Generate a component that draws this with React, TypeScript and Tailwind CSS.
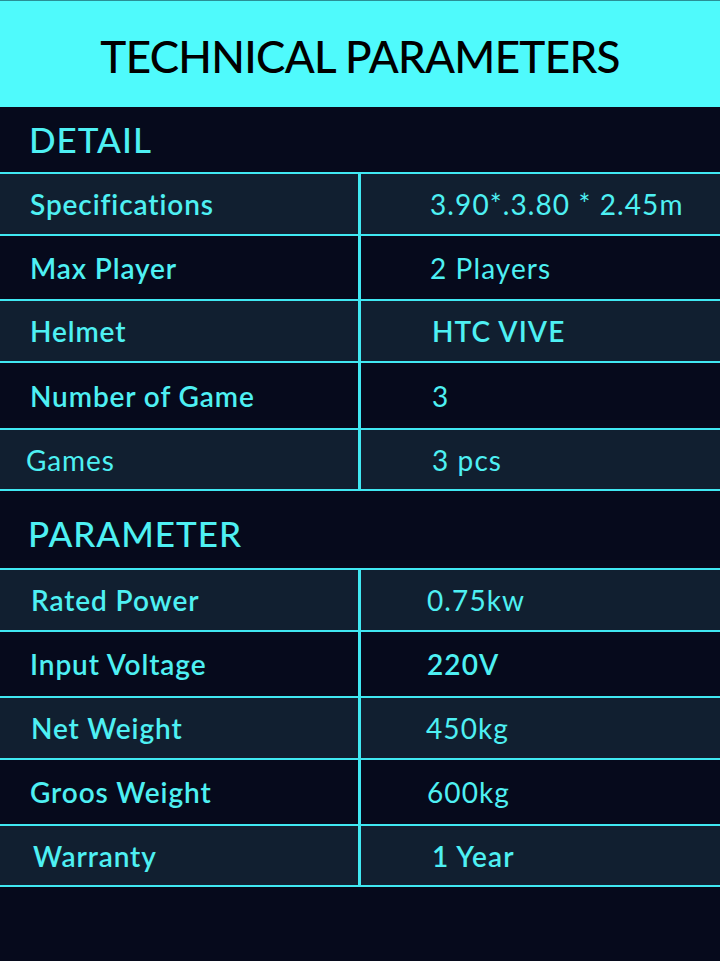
import React from 'react';

type Row = {
  label: string;
  value: string;
  h: string;
  bg: string;
  lx: string;
  vx: string;
  lw?: string;
  vw?: string;
};

const detailRows: Row[] = [
  { label: 'Specifications', value: '3.90*.3.80 * 2.45m', h: 'h-[62px]', bg: 'bg-[#111f30]', lx: 'pl-[30px]', vx: 'pl-[69px]' },
  { label: 'Max Player', value: '2 Players', h: 'h-[65px]', bg: 'bg-[#060a1c]', lx: 'pl-[30px]', vx: 'pl-[69px]' },
  { label: 'Helmet', value: 'HTC VIVE', h: 'h-[62px]', bg: 'bg-[#111f30]', lx: 'pl-[30px]', vx: 'pl-[71px]', vw: 'font-semibold' },
  { label: 'Number of Game', value: '3', h: 'h-[67px]', bg: 'bg-[#060a1c]', lx: 'pl-[30px]', vx: 'pl-[71px]' },
  { label: 'Games', value: '3 pcs', h: 'h-[61px]', bg: 'bg-[#111f30]', lx: 'pl-[26px]', vx: 'pl-[71px]', lw: 'font-normal' },
];

const paramRows: Row[] = [
  { label: 'Rated Power', value: '0.75kw', h: 'h-[62px]', bg: 'bg-[#111f30]', lx: 'pl-[31px]', vx: 'pl-[66px]' },
  { label: 'Input Voltage', value: '220V', h: 'h-[66px]', bg: 'bg-[#060a1c]', lx: 'pl-[30px]', vx: 'pl-[66px]', vw: 'font-semibold' },
  { label: 'Net Weight', value: '450kg', h: 'h-[62px]', bg: 'bg-[#111f30]', lx: 'pl-[31px]', vx: 'pl-[65px]' },
  { label: 'Groos Weight', value: '600kg', h: 'h-[66px]', bg: 'bg-[#060a1c]', lx: 'pl-[30px]', vx: 'pl-[66px]' },
  { label: 'Warranty', value: '1 Year', h: 'h-[61px]', bg: 'bg-[#111f30]', lx: 'pl-[33px]', vx: 'pl-[71px]', vw: 'font-semibold' },
];

const SpecRow: React.FC<{ row: Row }> = ({ row }) => (
  <div className={`flex ${row.h} ${row.bg} border-b-2 border-[#40e8f2]`}>
    <div className={`w-[361px] flex items-center border-r-[3px] border-[#40e8f2] ${row.lx}`}>
      <span className={`text-[28px] tracking-[0.9px] text-[#4ef0f3] ${row.lw ?? 'font-semibold'}`}>{row.label}</span>
    </div>
    <div className={`flex-1 flex items-center ${row.vx}`}>
      <span className={`text-[28px] tracking-[1.1px] text-[#4ef0f3] ${row.vw ?? 'font-normal'}`}>{row.value}</span>
    </div>
  </div>
);

export default function App() {
  return (
    <div className="w-[720px] h-[961px] bg-[#060a1c] flex flex-col font-['Lato','Open_Sans',sans-serif]">
      <div className="h-[107px] shrink-0 bg-[#4ffafc] border-t border-[#2a8f96] flex items-center justify-center">
        <h1 className="text-[44px] font-medium text-black tracking-[-0.7px] pt-[4px]">TECHNICAL PARAMETERS</h1>
      </div>

      <div className="h-[67px] shrink-0 border-b-2 border-[#40e8f2] flex items-center pl-[29px]">
        <h2 className="text-[35px] tracking-[1px] text-[#4ef0f3] font-medium">DETAIL</h2>
      </div>
      {detailRows.map(r => (
        <SpecRow key={r.label} row={r} />
      ))}

      <div className="h-[79px] shrink-0 border-b-2 border-[#40e8f2] flex items-center pl-[28px] pt-[8px]">
        <h2 className="text-[35px] tracking-[1px] text-[#4ef0f3] font-medium">PARAMETER</h2>
      </div>
      {paramRows.map(r => (
        <SpecRow key={r.label} row={r} />
      ))}
    </div>
  );
}
